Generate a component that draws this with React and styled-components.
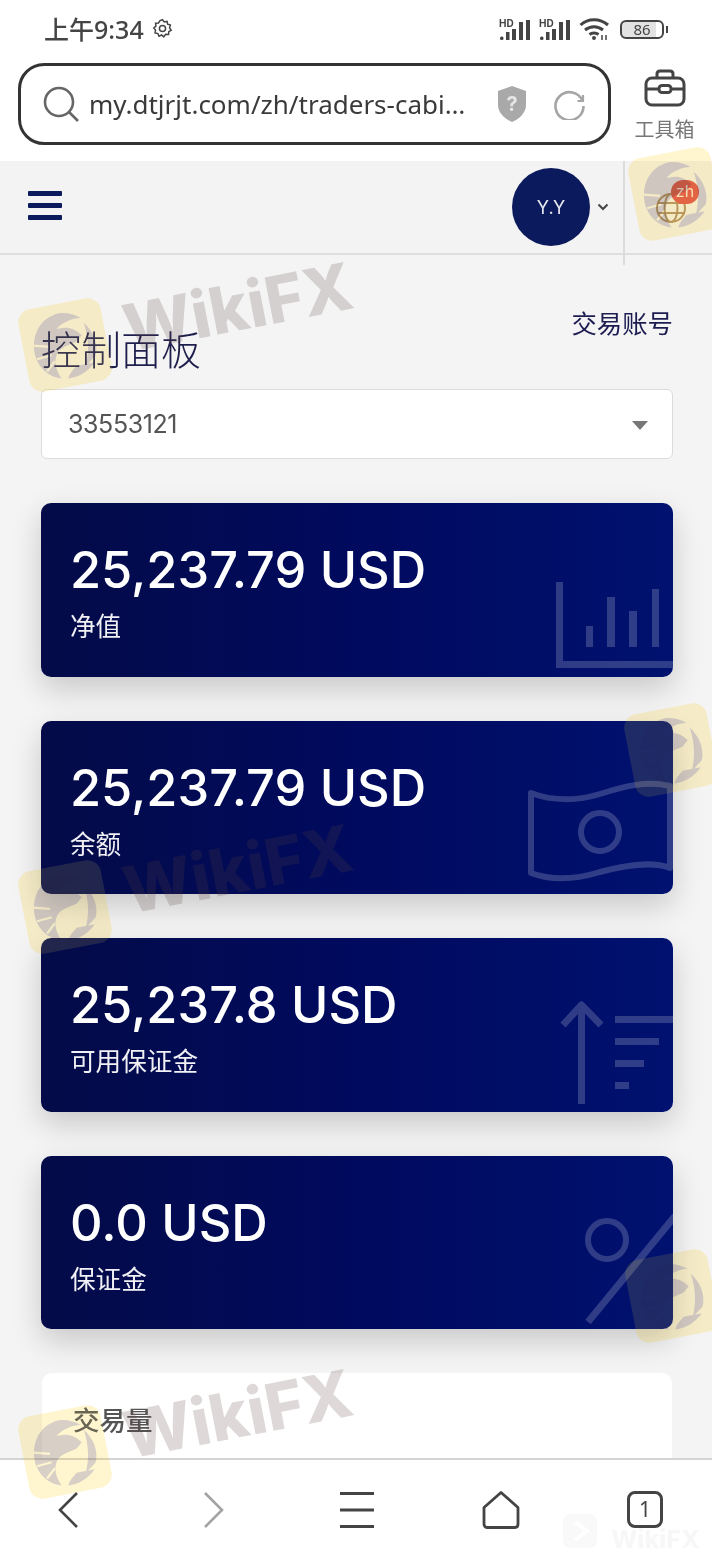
import React from "react";
import styled, { createGlobalStyle } from "styled-components";

const CJK = `"Noto Sans", "Noto Sans CJK SC", sans-serif`;
const NUM = `Inter, "Noto Sans CJK SC", sans-serif`;

const GlobalStyle = createGlobalStyle`
  html, body {
    margin: 0;
    padding: 0;
    background: #f4f4f5;
  }
  * {
    box-sizing: border-box;
  }
`;

const cards = [
  { id: "equity", value: "25,237.79 USD", label: "净值", icon: "chart" },
  { id: "balance", value: "25,237.79 USD", label: "余额", icon: "money" },
  { id: "free", value: "25,237.8 USD", label: "可用保证金", icon: "arrow" },
  { id: "margin", value: "0.0 USD", label: "保证金", icon: "percent" },
];

const marks = [
  { x: 23, y: 303, text: true },
  { x: 23, y: 865, text: true },
  { x: 23, y: 1410, text: true },
  { x: 633, y: 152 },
  { x: 629, y: 708 },
  { x: 630, y: 1254 },
];

const ChartIcon = () => (
  <CardIcon width="117" height="86" viewBox="0 0 117 86">
    <path d="M3.5 0V82.5H117" fill="none" stroke="#fff" strokeWidth="7" />
    <rect x="30" y="44" width="7" height="21" fill="#fff" />
    <rect x="51" y="15" width="8" height="50" fill="#fff" />
    <rect x="73" y="29" width="8" height="36" fill="#fff" />
    <rect x="96" y="7" width="7" height="58" fill="#fff" />
  </CardIcon>
);

const MoneyIcon = () => (
  <CardIcon $bottom={8} width="146" height="106" viewBox="0 0 146 106">
    <path
      d="M4 13C25 21 50 21 73 14C95 7 120 0 143 6V88C125 81 100 85 73 92C50 99 25 101 4 93Z"
      fill="none"
      stroke="#fff"
      strokeWidth="6"
      strokeLinejoin="round"
    />
    <circle cx="73" cy="52" r="19" fill="none" stroke="#fff" strokeWidth="6" />
  </CardIcon>
);

const ArrowIcon = () => (
  <CardIcon $bottom={7} width="113" height="105" viewBox="0 0 113 105">
    <path d="M21.5 104V5M3 25L21.5 5L41 25" fill="none" stroke="#fff" strokeWidth="7" strokeLinejoin="round" />
    <rect x="55" y="16" width="58" height="7" fill="#fff" />
    <rect x="55" y="38" width="44" height="7" fill="#fff" />
    <rect x="55" y="60" width="29" height="7" fill="#fff" />
    <rect x="55" y="82" width="14" height="7" fill="#fff" />
  </CardIcon>
);

const PercentIcon = () => (
  <CardIcon $bottom={5} width="88" height="110" viewBox="0 0 88 110">
    <circle cx="22" cy="26" r="19" fill="none" stroke="#fff" strokeWidth="6" />
    <path d="M90 2L3 108" fill="none" stroke="#fff" strokeWidth="7" />
  </CardIcon>
);

const cardIcons = {
  chart: ChartIcon,
  money: MoneyIcon,
  arrow: ArrowIcon,
  percent: PercentIcon,
};

const SignalIcon = () => (
  <svg width="33" height="23" viewBox="0 0 33 23">
    <text x="0" y="9" fontFamily="Inter, sans-serif" fontWeight="700" fontSize="10" fill="#444">HD</text>
    <rect x="1" y="18.5" width="3.5" height="3.5" rx="1.5" fill="#444" />
    <rect x="7" y="14" width="3.5" height="8" fill="#444" />
    <rect x="13" y="11" width="4" height="11" fill="#444" />
    <rect x="20" y="4" width="4" height="18" fill="#444" />
    <rect x="27" y="2" width="4" height="20" fill="#444" />
  </svg>
);

const EagleArt = () => (
  <svg width="84" height="84" viewBox="0 0 78 78">
    <rect width="78" height="78" rx="13" fill="#fff6d0" />
    <g fill="#d3cbc8">
      <path d="M38 9C24 10 12 20 10 38C9 52 16 64 30 69C26 60 26 52 30 46C34 40 42 40 50 38L56 33C50 24 42 22 34 23C40 18 50 16 58 17C52 12 45 9 38 9Z" />
      <path d="M60 22C67 31 70 44 65 54L54 62C60 50 62 36 60 22Z" />
      <path d="M36 70C46 71 56 67 63 60L46 60C42 63 38 66 36 70Z" />
    </g>
    <path d="M10 34L25 38M11 47L25 46M18 60L27 52" fill="none" stroke="#fff6d0" strokeWidth="2" />
  </svg>
);

const App = () => {
  return (
    <Page>
      <GlobalStyle />

      <StatusBar>
        <Clock>
          上午9:34
          <svg width="21" height="21" viewBox="0 0 24 24" fill="none" stroke="#444" strokeWidth="1.7">
            <path d="M12 2l2 2.6 3.2-.7.7 3.2L21 8l-.9 3.2L22 14l-2.8 1.6-.3 3.3-3.3-.2L13.4 21.5 11 19.4l-3 1.4-1.3-3-3.2-.8.5-3.2L2 11.5l2.5-2.2-.4-3.3 3.3-.3L9.2 3z" />
            <circle cx="12" cy="12" r="3.5" />
          </svg>
        </Clock>
        <StatusIcons>
          <SignalIcon />
          <SignalIcon />
          <svg width="31" height="24" viewBox="0 0 31 24" fill="none" stroke="#444" strokeWidth="3">
            <path d="M1.5 8C9 1 21 1 29 8M6 13C11.5 8.5 18.5 8.5 24 13M10.5 17.5C13 15.5 17 15.5 19.5 17.5" />
            <circle cx="15" cy="21" r="2" fill="#444" stroke="none" />
            <path d="M23 23V18M27 18V23" strokeWidth="1.5" />
          </svg>
          <Battery>86</Battery>
        </StatusIcons>
      </StatusBar>

      <BrowserBar>
        <AddressBox>
          <svg width="37" height="37" viewBox="0 0 37 37" fill="none" stroke="#666" strokeWidth="2.6">
            <circle cx="16" cy="16" r="14" />
            <path d="M26 26L35 35" />
          </svg>
          <UrlText>my.dtjrjt.com/zh/traders-cabi…</UrlText>
          <ShieldIcon width="30" height="36" viewBox="0 0 30 36">
            <path d="M15 0L29 5V19C29 27 22 33 15 36C8 33 1 27 1 19V5Z" fill="#a9a9a9" />
            <text x="15" y="25" textAnchor="middle" fontFamily="Inter, sans-serif" fontWeight="700" fontSize="20" fill="#e6e6e6">?</text>
          </ShieldIcon>
          <svg width="31" height="31" viewBox="0 0 31 31" fill="none" stroke="#a5a5a5" strokeWidth="2.6">
            <path d="M28.5 12A14 14 0 1 0 29.5 17" />
            <path d="M23.5 12H29V6" strokeWidth="2.2" />
          </svg>
        </AddressBox>
        <ToolBox>
          <svg width="42" height="38" viewBox="0 0 42 38" fill="none" stroke="#444" strokeWidth="3">
            <rect x="2" y="9" width="38" height="27" rx="6" />
            <path d="M13 9V5C13 3 14.5 2 16 2H26C27.5 2 29 3 29 5V9M2 20H15M27 20H40" />
            <rect x="15" y="16.5" width="12" height="7" rx="3" />
          </svg>
          <ToolLabel>工具箱</ToolLabel>
        </ToolBox>
      </BrowserBar>

      <SiteHeader>
        <Burger>
          <span />
          <span />
          <span />
        </Burger>
        <HeaderRight>
          <Avatar>Y.Y</Avatar>
          <svg width="12" height="8" viewBox="0 0 12 8" fill="none" stroke="#444" strokeWidth="2">
            <path d="M1.5 1.5L6 6L10.5 1.5" />
          </svg>
          <LangSlot>
            <svg width="32" height="32" viewBox="0 0 32 32" fill="none" stroke="#b0915c" strokeWidth="2">
              <circle cx="16" cy="16" r="14" />
              <ellipse cx="16" cy="16" rx="6.5" ry="14" />
              <path d="M3 11H29M3 21H29" />
            </svg>
            <LangBadge>zh</LangBadge>
          </LangSlot>
        </HeaderRight>
      </SiteHeader>

      <Main>
        <TitleRow>
          <PageTitle>控制面板</PageTitle>
          <AccountLink>交易账号</AccountLink>
        </TitleRow>

        <SelectBox>
          33553121
          <Caret />
        </SelectBox>

        <CardList>
          {cards.map((card) => {
            const Icon = cardIcons[card.icon];
            return (
              <StatCard key={card.id}>
                <StatValue>{card.value}</StatValue>
                <StatLabel>{card.label}</StatLabel>
                <Icon />
              </StatCard>
            );
          })}
        </CardList>

        <VolumeCard>交易量</VolumeCard>
      </Main>

      <BottomNav>
        <NavSlot>
          <svg width="22" height="38" viewBox="0 0 22 38" fill="none" stroke="#444" strokeWidth="2.6">
            <path d="M20 2L3 19L20 36" />
          </svg>
        </NavSlot>
        <NavSlot>
          <svg width="26" height="38" viewBox="0 0 26 38" fill="none" stroke="#a3a3a3" strokeWidth="2.6">
            <path d="M6 2L23 19L6 36" />
          </svg>
        </NavSlot>
        <NavSlot>
          <svg width="36" height="38" viewBox="0 0 36 38" fill="#444">
            <rect x="1" y="1" width="34" height="3" />
            <rect x="1" y="17.5" width="34" height="3" />
            <rect x="1" y="34" width="34" height="3" />
          </svg>
        </NavSlot>
        <NavSlot>
          <svg width="38" height="38" viewBox="0 0 38 38" fill="none" stroke="#444" strokeWidth="2.8" strokeLinejoin="round">
            <path d="M19 1.5L36 16.5V33C36 35 35 36.5 33 36.5H5C3 36.5 2 35 2 33V16.5Z" />
          </svg>
        </NavSlot>
        <NavSlot>
          <TabCount>1</TabCount>
        </NavSlot>
      </BottomNav>

      {marks.map((mark) => (
        <React.Fragment key={`${mark.x}-${mark.y}`}>
          <StampArt $x={mark.x} $y={mark.y}>
            <EagleArt />
          </StampArt>
          <StampTint $x={mark.x} $y={mark.y} />
          {mark.text && (
            <StampText $x={mark.x} $y={mark.y}>
              WikiFX
            </StampText>
          )}
        </React.Fragment>
      ))}

      <FaintMark>
        <svg width="34" height="34" viewBox="0 0 34 34">
          <rect width="34" height="34" rx="7" fill="rgba(0,0,0,0.022)" />
          <path d="M12 8L24 17L12 26" fill="none" stroke="#fff" strokeWidth="4" />
        </svg>
        WikiFX
      </FaintMark>
    </Page>
  );
};

export default App;

const Page = styled.div`
  position: relative;
  width: 712px;
  height: 1566px;
  display: flex;
  flex-direction: column;
  overflow: hidden;
  background: #f4f4f5;
  font-family: ${CJK};
`;

const StatusBar = styled.div`
  height: 60px;
  flex: none;
  background: #fff;
  display: flex;
  align-items: center;
  justify-content: space-between;
  padding: 0 44px 4px 44px;
`;

const Clock = styled.div`
  display: flex;
  align-items: center;
  gap: 8px;
  font-size: 25px;
  font-weight: 500;
  color: #444;
`;

const StatusIcons = styled.div`
  display: flex;
  align-items: center;
  gap: 7px;
  padding-top: 2px;
`;

const Battery = styled.div`
  position: relative;
  width: 44px;
  height: 19px;
  margin: 0 4px 0 3px;
  border: 2px solid #444;
  border-radius: 6px;
  background: linear-gradient(90deg, #e2e2e2 84%, #fff 84%);
  color: #444;
  font-size: 15px;
  line-height: 15px;
  text-align: center;

  &::after {
    content: "";
    position: absolute;
    right: -6px;
    top: 4px;
    width: 2px;
    height: 7px;
    background: #444;
  }
`;

const BrowserBar = styled.div`
  height: 101px;
  flex: none;
  background: #fff;
  display: flex;
  align-items: flex-start;
  padding: 3px 0 0 18px;
`;

const AddressBox = styled.div`
  width: 593px;
  height: 82px;
  border: 3px solid #333;
  border-radius: 26px;
  display: flex;
  align-items: center;
  padding: 0 23px 0 22px;
`;

const UrlText = styled.div`
  flex: 1;
  margin-left: 9px;
  font-size: 26px;
  color: #3a3a3a;
  white-space: nowrap;
  overflow: hidden;
`;

const ShieldIcon = styled.svg`
  margin-right: 27px;
`;

const ToolBox = styled.div`
  flex: 1;
  display: flex;
  flex-direction: column;
  align-items: center;
  gap: 10px;
  padding: 6px 0 0 6px;
`;

const ToolLabel = styled.div`
  font-size: 20px;
  line-height: 26px;
  color: #777;
`;

const SiteHeader = styled.header`
  position: relative;
  height: 94px;
  flex: none;
  display: flex;
  align-items: center;
  justify-content: space-between;
  padding-left: 28px;
  background: #f3f3f4;
  border-bottom: 2px solid #dedede;
`;

const Burger = styled.div`
  width: 34px;
  margin-bottom: 3px;
  display: flex;
  flex-direction: column;
  gap: 7px;

  span {
    height: 5px;
    background: #0b1a5c;
    border-radius: 1px;
  }
`;

const HeaderRight = styled.div`
  display: flex;
  align-items: center;
`;

const Avatar = styled.div`
  width: 78px;
  height: 78px;
  margin-right: 7px;
  border-radius: 50%;
  background: #0b1a5c;
  color: #e8e8f0;
  display: flex;
  align-items: center;
  justify-content: center;
  font-family: ${NUM};
  font-size: 18px;
`;

const LangSlot = styled.div`
  position: relative;
  width: 89px;
  height: 92px;
  margin-left: 14px;
  padding: 31px 0 0 32px;

  &::before {
    content: "";
    position: absolute;
    left: 0;
    top: 0;
    width: 2px;
    height: 104px;
    background: #dcdcdc;
  }
`;

const LangBadge = styled.div`
  position: absolute;
  left: 48px;
  top: 19px;
  width: 28px;
  height: 24px;
  border-radius: 12px;
  background: #e0533f;
  color: #f6e6d8;
  font-family: ${NUM};
  font-size: 16px;
  line-height: 23px;
  text-align: center;
`;

const Main = styled.main`
  flex: 1;
  min-height: 0;
  overflow: hidden;
  padding: 0 39px 0 41px;
`;

const TitleRow = styled.div`
  height: 134px;
  display: flex;
  justify-content: space-between;
  align-items: flex-start;
`;

const PageTitle = styled.h1`
  margin: 63px 0 0 0;
  font-size: 40px;
  line-height: 60px;
  font-weight: 300;
  color: #1e1e4c;
  font-family: "Noto Sans CJK SC", sans-serif;
`;

const AccountLink = styled.div`
  margin: 49px 0 0 0;
  font-size: 25.4px;
  line-height: 38px;
  color: #1c1c50;
`;

const SelectBox = styled.div`
  position: relative;
  height: 70px;
  display: flex;
  align-items: center;
  padding-left: 26px;
  background: #fff;
  border: 1px solid #dcdcdc;
  border-radius: 6px;
  font-family: ${NUM};
  font-size: 25px;
  letter-spacing: -0.4px;
  color: #555;
`;

const Caret = styled.span`
  position: absolute;
  right: 24px;
  top: 31px;
  border-left: 8px solid transparent;
  border-right: 8px solid transparent;
  border-top: 9px solid #777;
`;

const CardList = styled.div`
  margin-top: 44px;
  display: flex;
  flex-direction: column;
  gap: 44px;
`;

const StatCard = styled.section`
  position: relative;
  height: 173.5px;
  padding: 36px 29px 0;
  border-radius: 10px;
  overflow: hidden;
  background: linear-gradient(90deg, #040b48 0%, #000a5e 50%, #00116f 100%);
  color: #fff;
  box-shadow: 0 12px 30px rgba(0, 0, 0, 0.18);
`;

const StatValue = styled.div`
  font-family: ${NUM};
  font-size: 50.5px;
  font-weight: 500;
  line-height: 62px;
`;

const StatLabel = styled.div`
  margin-top: 7px;
  font-size: 25.6px;
  line-height: 38px;
  color: #f0f0f5;
`;

const CardIcon = styled.svg`
  position: absolute;
  right: 0;
  bottom: ${(p) => (p.$bottom !== undefined ? p.$bottom : 9)}px;
  opacity: 0.19;
`;

const VolumeCard = styled.section`
  height: 200px;
  margin: 44px 1px 0 1px;
  padding: 28px 31px;
  background: #fff;
  border-radius: 10px;
  font-size: 26.5px;
  line-height: 38px;
  font-weight: 500;
  color: #555;
`;

const BottomNav = styled.nav`
  position: relative;
  height: 108px;
  flex: none;
  background: #fff;
  border-top: 2px solid #d4d4d4;
  display: flex;
  justify-content: space-between;
  align-items: flex-start;
  padding: 31px 47px 0 48px;
`;

const NavSlot = styled.div`
  width: 40px;
  display: flex;
  justify-content: center;
`;

const TabCount = styled.div`
  width: 36px;
  height: 37px;
  border: 3px solid #444;
  border-radius: 8px;
  color: #444;
  font-size: 21px;
  line-height: 31px;
  text-align: center;
`;

const StampArt = styled.div`
  position: absolute;
  left: ${(p) => p.$x}px;
  top: ${(p) => p.$y}px;
  width: 84px;
  height: 84px;
  line-height: 0;
  transform: rotate(-11deg);
  mix-blend-mode: multiply;
  pointer-events: none;
`;

const StampTint = styled.div`
  position: absolute;
  left: ${(p) => p.$x}px;
  top: ${(p) => p.$y}px;
  width: 84px;
  height: 84px;
  border-radius: 14px;
  background: rgba(255, 238, 195, 0.12);
  transform: rotate(-11deg);
  pointer-events: none;
`;

const StampText = styled.div`
  position: absolute;
  left: ${(p) => p.$x + 103}px;
  top: ${(p) => p.$y - 1}px;
  font-family: Inter, sans-serif;
  font-size: 65px;
  font-weight: 800;
  line-height: 78px;
  color: rgba(90, 65, 60, 0.2);
  white-space: nowrap;
  transform: rotate(-11deg);
  transform-origin: -61px 43px;
  pointer-events: none;
`;

const FaintMark = styled.div`
  position: absolute;
  right: 12px;
  bottom: 18px;
  display: flex;
  align-items: flex-end;
  gap: 14px;
  font-family: Inter, sans-serif;
  font-size: 25px;
  font-weight: 800;
  line-height: 18px;
  color: rgba(0, 0, 0, 0.03);
`;
